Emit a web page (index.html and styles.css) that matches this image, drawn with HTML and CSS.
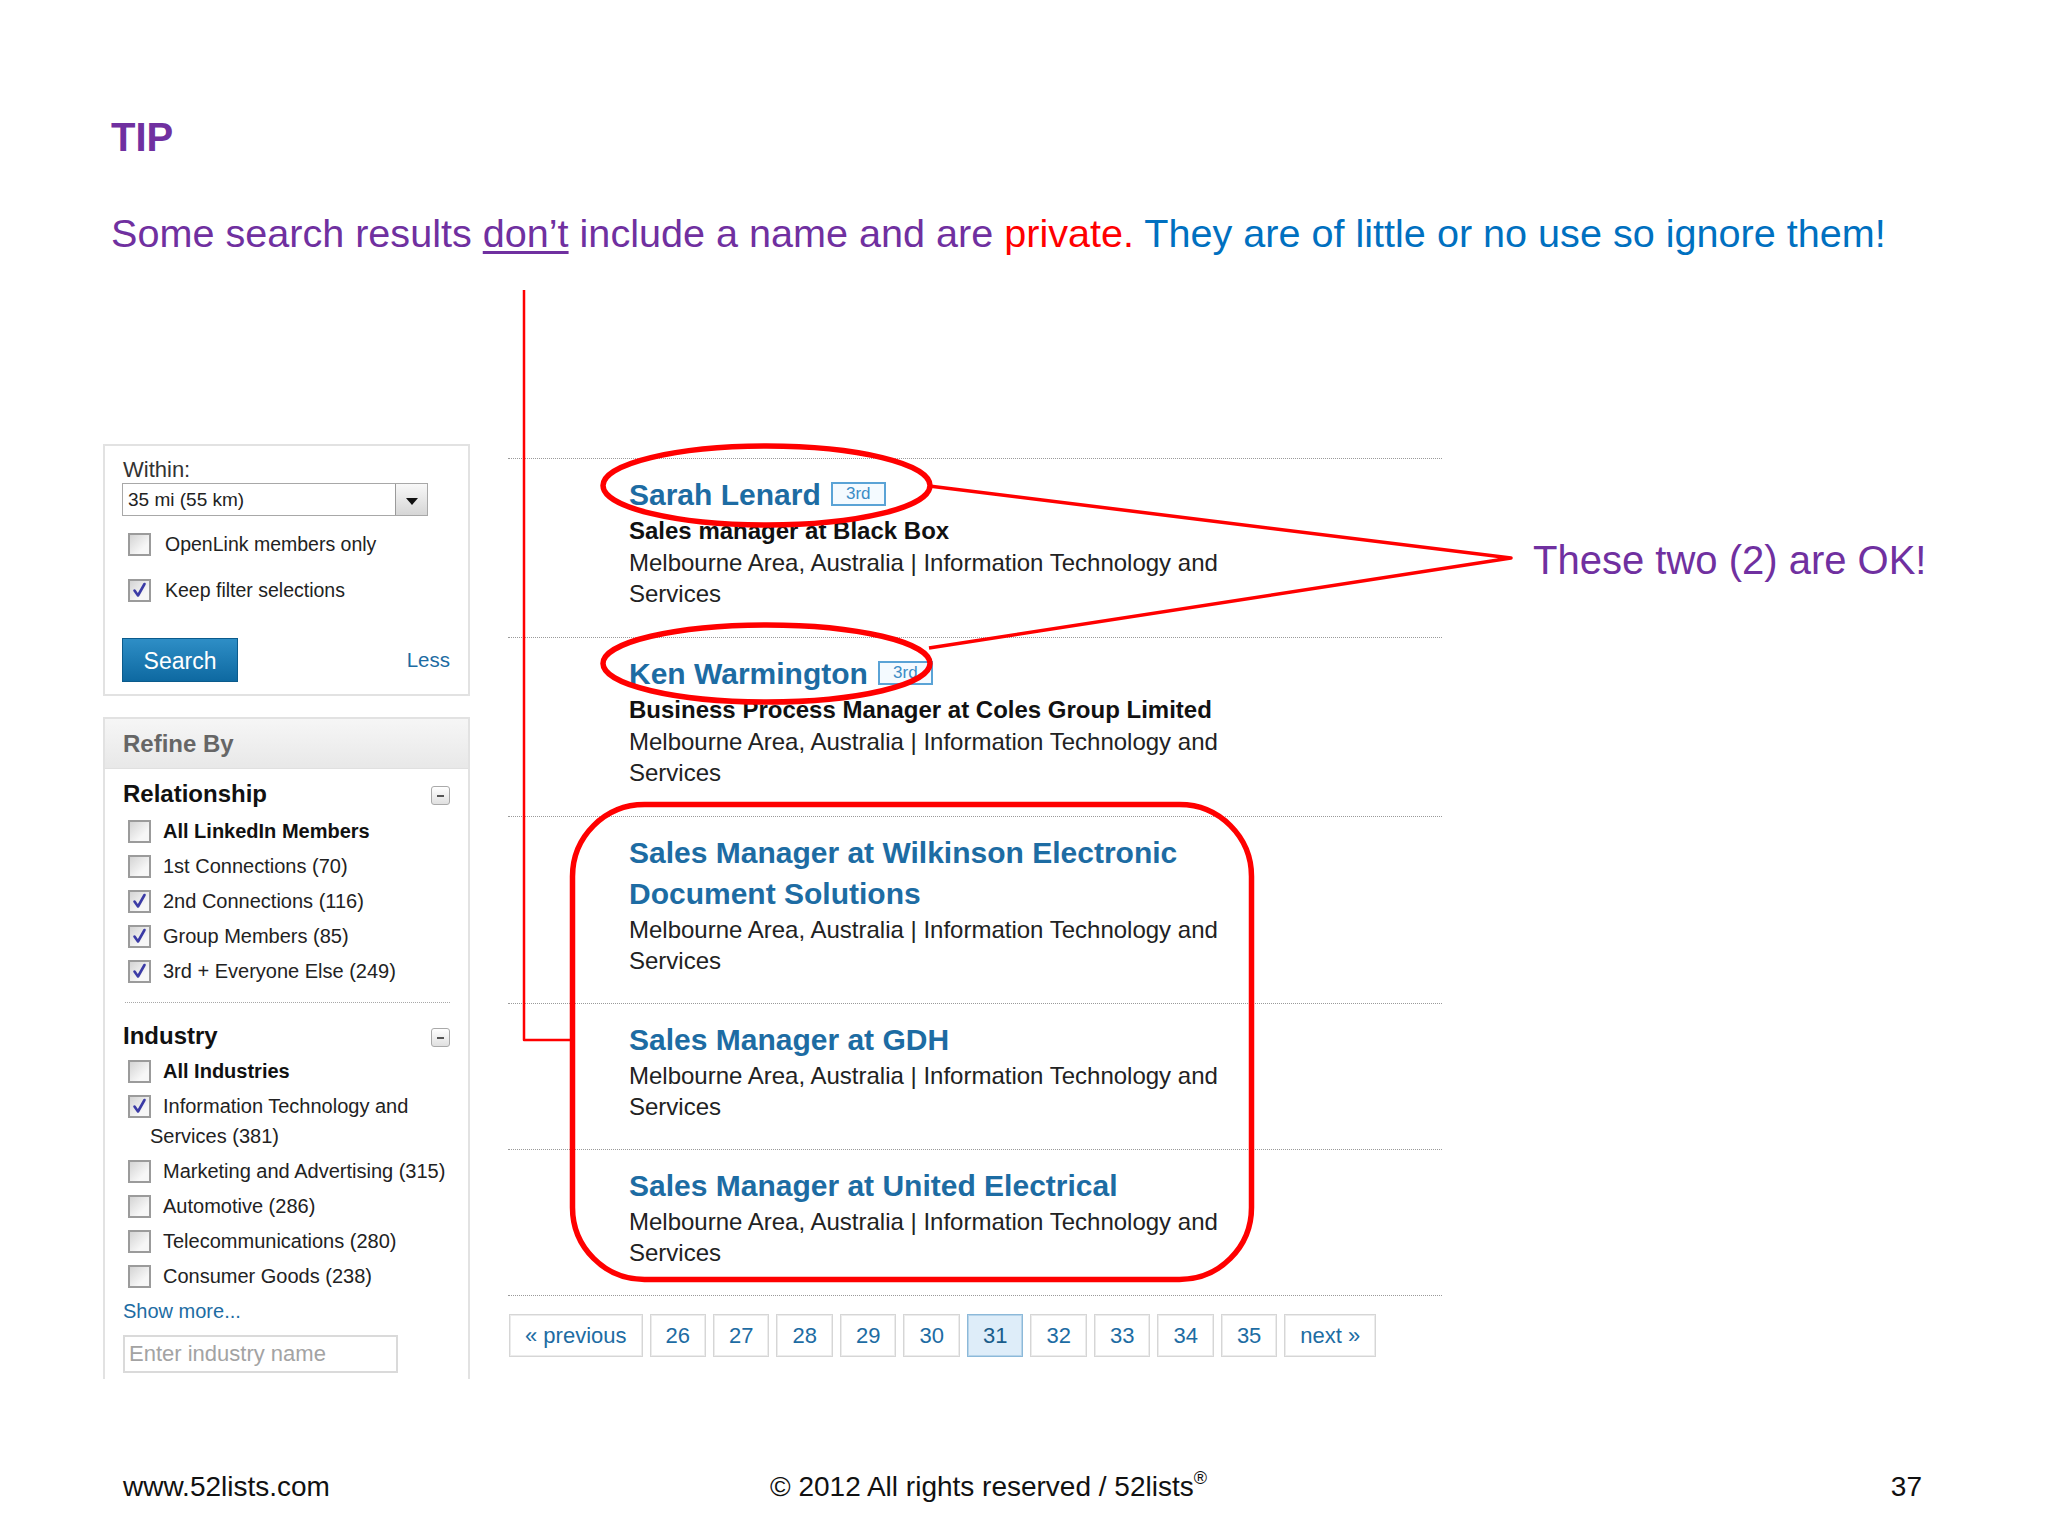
FILE: index.html
```html
<!DOCTYPE html>
<html>
<head>
<meta charset="utf-8">
<link rel="stylesheet" href="styles.css">
</head>
<body>
<div class="slide">
  <div class="tip">TIP</div>
  <p class="lead">Some search results <u>don’t</u> include a name and are <span class="red">private.</span><span class="blue"> They are of little or no use so ignore them!</span></p>

  <div class="main">
    <aside class="side">
      <div class="panel search-panel">
        <div class="within-label">Within:</div>
        <div class="select"><span class="select-val">35 mi (55 km)</span><span class="select-btn"><span class="tri"></span></span></div>
        <div class="opt opt1"><span class="cb"></span>OpenLink members only</div>
        <div class="opt opt2"><span class="cb"><svg viewBox="0 0 19 19" class="chk"><path d="M4.5 9.5 L8 14.5 L14.5 3"/></svg></span>Keep filter selections</div>
        <div class="search-row"><span class="btn">Search</span><span class="less">Less</span></div>
      </div>

      <div class="panel refine">
        <div class="refine-head">Refine By</div>
        <div class="refine-body">
          <div class="facet-head"><span>Relationship</span><span class="minus"></span></div>
          <div class="facet-list rel-list">
            <div class="row"><span class="cb"></span><b>All LinkedIn Members</b></div>
            <div class="row"><span class="cb"></span>1st Connections (70)</div>
            <div class="row"><span class="cb"><svg viewBox="0 0 19 19" class="chk"><path d="M4.5 9.5 L8 14.5 L14.5 3"/></svg></span>2nd Connections (116)</div>
            <div class="row"><span class="cb"><svg viewBox="0 0 19 19" class="chk"><path d="M4.5 9.5 L8 14.5 L14.5 3"/></svg></span>Group Members (85)</div>
            <div class="row"><span class="cb"><svg viewBox="0 0 19 19" class="chk"><path d="M4.5 9.5 L8 14.5 L14.5 3"/></svg></span>3rd + Everyone Else (249)</div>
          </div>
          <div class="sep"></div>
          <div class="facet-head"><span>Industry</span><span class="minus"></span></div>
          <div class="facet-list ind-list">
            <div class="row"><span class="cb"></span><b>All Industries</b></div>
            <div class="row"><span class="cb"><svg viewBox="0 0 19 19" class="chk"><path d="M4.5 9.5 L8 14.5 L14.5 3"/></svg></span>Information Technology and Services (381)</div>
            <div class="row"><span class="cb"></span>Marketing and Advertising (315)</div>
            <div class="row"><span class="cb"></span>Automotive (286)</div>
            <div class="row"><span class="cb"></span>Telecommunications (280)</div>
            <div class="row"><span class="cb"></span>Consumer Goods (238)</div>
          </div>
          <div class="show-more">Show more...</div>
          <div class="ind-input">Enter industry name</div>
        </div>
      </div>
    </aside>

    <section class="results">
      <div class="result has-title">
        <h3 class="name">Sarah Lenard<span class="badge">3rd</span></h3>
        <div class="title">Sales manager at Black Box</div>
        <div class="loc">Melbourne Area, Australia | Information Technology and Services</div>
      </div>
      <div class="result has-title">
        <h3 class="name">Ken Warmington<span class="badge">3rd</span></h3>
        <div class="title">Business Process Manager at Coles Group Limited</div>
        <div class="loc">Melbourne Area, Australia | Information Technology and Services</div>
      </div>
      <div class="result">
        <h3 class="name">Sales Manager at Wilkinson Electronic Document Solutions</h3>
        <div class="loc">Melbourne Area, Australia | Information Technology and Services</div>
      </div>
      <div class="result">
        <h3 class="name">Sales Manager at GDH</h3>
        <div class="loc">Melbourne Area, Australia | Information Technology and Services</div>
      </div>
      <div class="result">
        <h3 class="name">Sales Manager at United Electrical</h3>
        <div class="loc">Melbourne Area, Australia | Information Technology and Services</div>
      </div>
      <div class="pager">
        <span class="pg">« previous</span>
        <span class="pg">26</span>
        <span class="pg">27</span>
        <span class="pg">28</span>
        <span class="pg">29</span>
        <span class="pg">30</span>
        <span class="pg cur">31</span>
        <span class="pg">32</span>
        <span class="pg">33</span>
        <span class="pg">34</span>
        <span class="pg">35</span>
        <span class="pg">next »</span>
      </div>
    </section>
  </div>

  <footer class="foot">
    <span>www.52lists.com</span>
    <span>© 2012 All rights reserved / 52lists<sup>®</sup></span>
    <span>37</span>
  </footer>

  <svg class="annot" width="2048" height="1536" viewBox="0 0 2048 1536">
    <g fill="none" stroke="#ff0000" stroke-linejoin="round" stroke-linecap="round">
      <ellipse cx="766.5" cy="485.5" rx="163.5" ry="39.5" stroke-width="5.5"/>
      <ellipse cx="766.5" cy="663.5" rx="163.5" ry="38.5" stroke-width="5.5"/>
      <polyline points="929,486 1511,558 929,648" stroke-width="3.5" stroke-linecap="butt"/>
      <rect x="572.5" y="804.5" width="679" height="475" rx="72" ry="72" stroke-width="5.5"/>
      <polyline points="524,290 524,1040 572,1040" stroke-width="2.5" stroke-linecap="butt"/>
    </g>
  </svg>
  <div class="ok-note">These two (2) are OK!</div>
</div>
</body>
</html>
```

FILE: styles.css
```css
* { box-sizing: border-box; }
html, body { margin: 0; padding: 0; background: #fff; }
body { font-family: "Liberation Sans", Arial, sans-serif; }

.slide {
  position: relative;
  width: 2048px;
  height: 1536px;
  overflow: hidden;
  padding-top: 117px;
}

.tip {
  margin-left: 111px;
  font-size: 40px;
  line-height: 40px;
  font-weight: bold;
  color: #7030a0;
}

.lead {
  margin: 56px 0 0 111px;
  font-size: 39.6px;
  line-height: 40px;
  color: #7030a0;
  white-space: nowrap;
}
.lead u { text-decoration-thickness: 3px; text-underline-offset: 4px; }
.red { color: #ff0000; }
.blue { color: #0070c0; }

/* main area */
.main {
  display: flex;
  align-items: flex-start;
  margin-top: 191px;
  padding-left: 103px;
}
.side { width: 367px; flex: none; }

.panel { border: 2px solid #e2e2e2; background: #fff; }

.search-panel { padding: 11px 18px 12px 18px; }
.within-label { font-size: 22px; line-height: 26px; color: #333; }

.select {
  display: flex;
  width: 306px;
  height: 33px;
  margin-left: -1px;
  border: 1px solid #a8a8a8;
  background: #fff;
}
.select-val { flex: 1; font-size: 19px; line-height: 31px; padding-left: 5px; color: #222; }
.select-btn {
  width: 32px;
  border-left: 1px solid #9a9a9a;
  background: linear-gradient(#f8f8f8, #d6d6d6);
  display: flex;
  align-items: center;
  justify-content: center;
}
.tri {
  width: 0; height: 0;
  border-left: 6px solid transparent;
  border-right: 6px solid transparent;
  border-top: 7px solid #111;
  margin-top: 4px;
}

.opt {
  display: flex;
  align-items: center;
  height: 23px;
  font-size: 19.5px;
  color: #222;
}
.opt1 { margin-top: 17px; }
.opt2 { margin-top: 23px; }
.opt .cb { margin: 0 14px 0 5px; }

.cb {
  display: inline-block;
  flex: none;
  width: 23px;
  height: 23px;
  border: 2px solid #9b9b9b;
  background: linear-gradient(135deg, #d4d4d4, #f7f7f7 70%);
}
.chk { display: block; width: 19px; height: 19px; }
.chk path { fill: none; stroke: #3b3ba6; stroke-width: 2.6; stroke-linecap: round; stroke-linejoin: round; }

.search-row {
  display: flex;
  justify-content: space-between;
  align-items: center;
  margin-top: 36px;
}
.btn {
  width: 116px;
  height: 44px;
  margin-left: -1px;
  padding-top: 3px;
  background: linear-gradient(#2e8ec6, #0e69a1);
  border: 1px solid #0b5b8c;
  color: #fff;
  font-size: 23px;
  display: flex;
  align-items: center;
  justify-content: center;
}
.less { font-size: 20.5px; color: #1d6ca3; }

.refine { margin-top: 21px; border-bottom: none; }
.refine-head {
  height: 50px;
  background: linear-gradient(#f6f6f6, #e8e8e8);
  border-bottom: 1px solid #e0e0e0;
  padding-left: 18px;
  font-size: 24px;
  line-height: 49px;
  font-weight: bold;
  color: #666;
}
.refine-body { padding: 10px 18px 6px 18px; }

.facet-head {
  display: flex;
  justify-content: space-between;
  align-items: center;
  font-size: 24px;
  line-height: 30px;
  font-weight: bold;
  color: #111;
}
.minus {
  position: relative;
  width: 19px;
  height: 19px;
  border: 1px solid #a9a9a9;
  border-radius: 3px;
  background: linear-gradient(#ffffff, #e0e0e0);
  margin-top: 2px;
}
.minus::after {
  content: "";
  position: absolute;
  left: 5px;
  top: 8px;
  width: 7px;
  height: 2px;
  background: #555;
}

.rel-list { margin-top: 4.5px; }
.ind-list { margin-top: 2.5px; }
.row {
  font-size: 20px;
  line-height: 30px;
  padding: 2.5px 0 2.5px 27px;
  color: #222;
}
.row .cb { vertical-align: top; margin: 4px 12px 0 -22px; }
.row b { color: #111; }

.sep { border-top: 1px dotted #a8a8a8; margin: 13.5px 0 18px 2px; }

.show-more { font-size: 20px; line-height: 30px; color: #1d6ca3; margin-top: 2px; }
.ind-input {
  margin-top: 9px;
  width: 275px;
  height: 38px;
  border: 2px solid #dadada;
  font-size: 22px;
  line-height: 34px;
  padding-left: 4px;
  color: #a3a3a3;
}

/* results */
.results { width: 934px; margin-left: 38px; margin-top: 14px; }
.result {
  border-top: 1px dotted #9a9a9a;
  padding: 15px 0 27px 121px;
}
.result.has-title { padding-bottom: 28px; }
.name {
  margin: 0;
  width: 640px;
  font-size: 30px;
  line-height: 41px;
  font-weight: bold;
  color: #1d6ca3;
}
.badge {
  display: inline-block;
  width: 55px;
  height: 24px;
  margin-left: 10px;
  border: 2px solid #5aa3d6;
  background: #f4faff;
  color: #3c8cc6;
  font-size: 17px;
  line-height: 20px;
  font-weight: normal;
  text-align: center;
  vertical-align: 6px;
}
.title { font-size: 24px; line-height: 32px; font-weight: bold; color: #111; }
.loc { width: 610px; font-size: 24px; line-height: 31px; color: #222; }

.pager {
  display: flex;
  gap: 7px;
  border-top: 1px dotted #9a9a9a;
  padding: 18px 0 0 1px;
}
.pg {
  height: 43px;
  padding: 0 15px;
  border: 1px solid #d6d6d6;
  box-shadow: inset 0 0 0 1px #ececec;
  font-size: 22px;
  line-height: 41px;
  color: #1d6ca3;
}
.pg.cur { background: #deedf9; border-color: #8cb9d9; box-shadow: inset 0 0 0 1px #b6d4ea; color: #1a5d8b; }

/* footer */
.foot {
  display: grid;
  grid-template-columns: 647px 1fr auto;
  margin-top: 92px;
  padding: 0 126px 0 123px;
  font-size: 28px;
  line-height: 32px;
  color: #111;
}
.foot sup { font-size: 18px; line-height: 0; vertical-align: 12px; }

/* annotations */
.annot { position: absolute; left: 0; top: 0; pointer-events: none; }
.ok-note {
  position: absolute;
  left: 1533px;
  top: 540px;
  font-size: 40px;
  line-height: 40px;
  color: #7030a0;
  white-space: nowrap;
}
```
